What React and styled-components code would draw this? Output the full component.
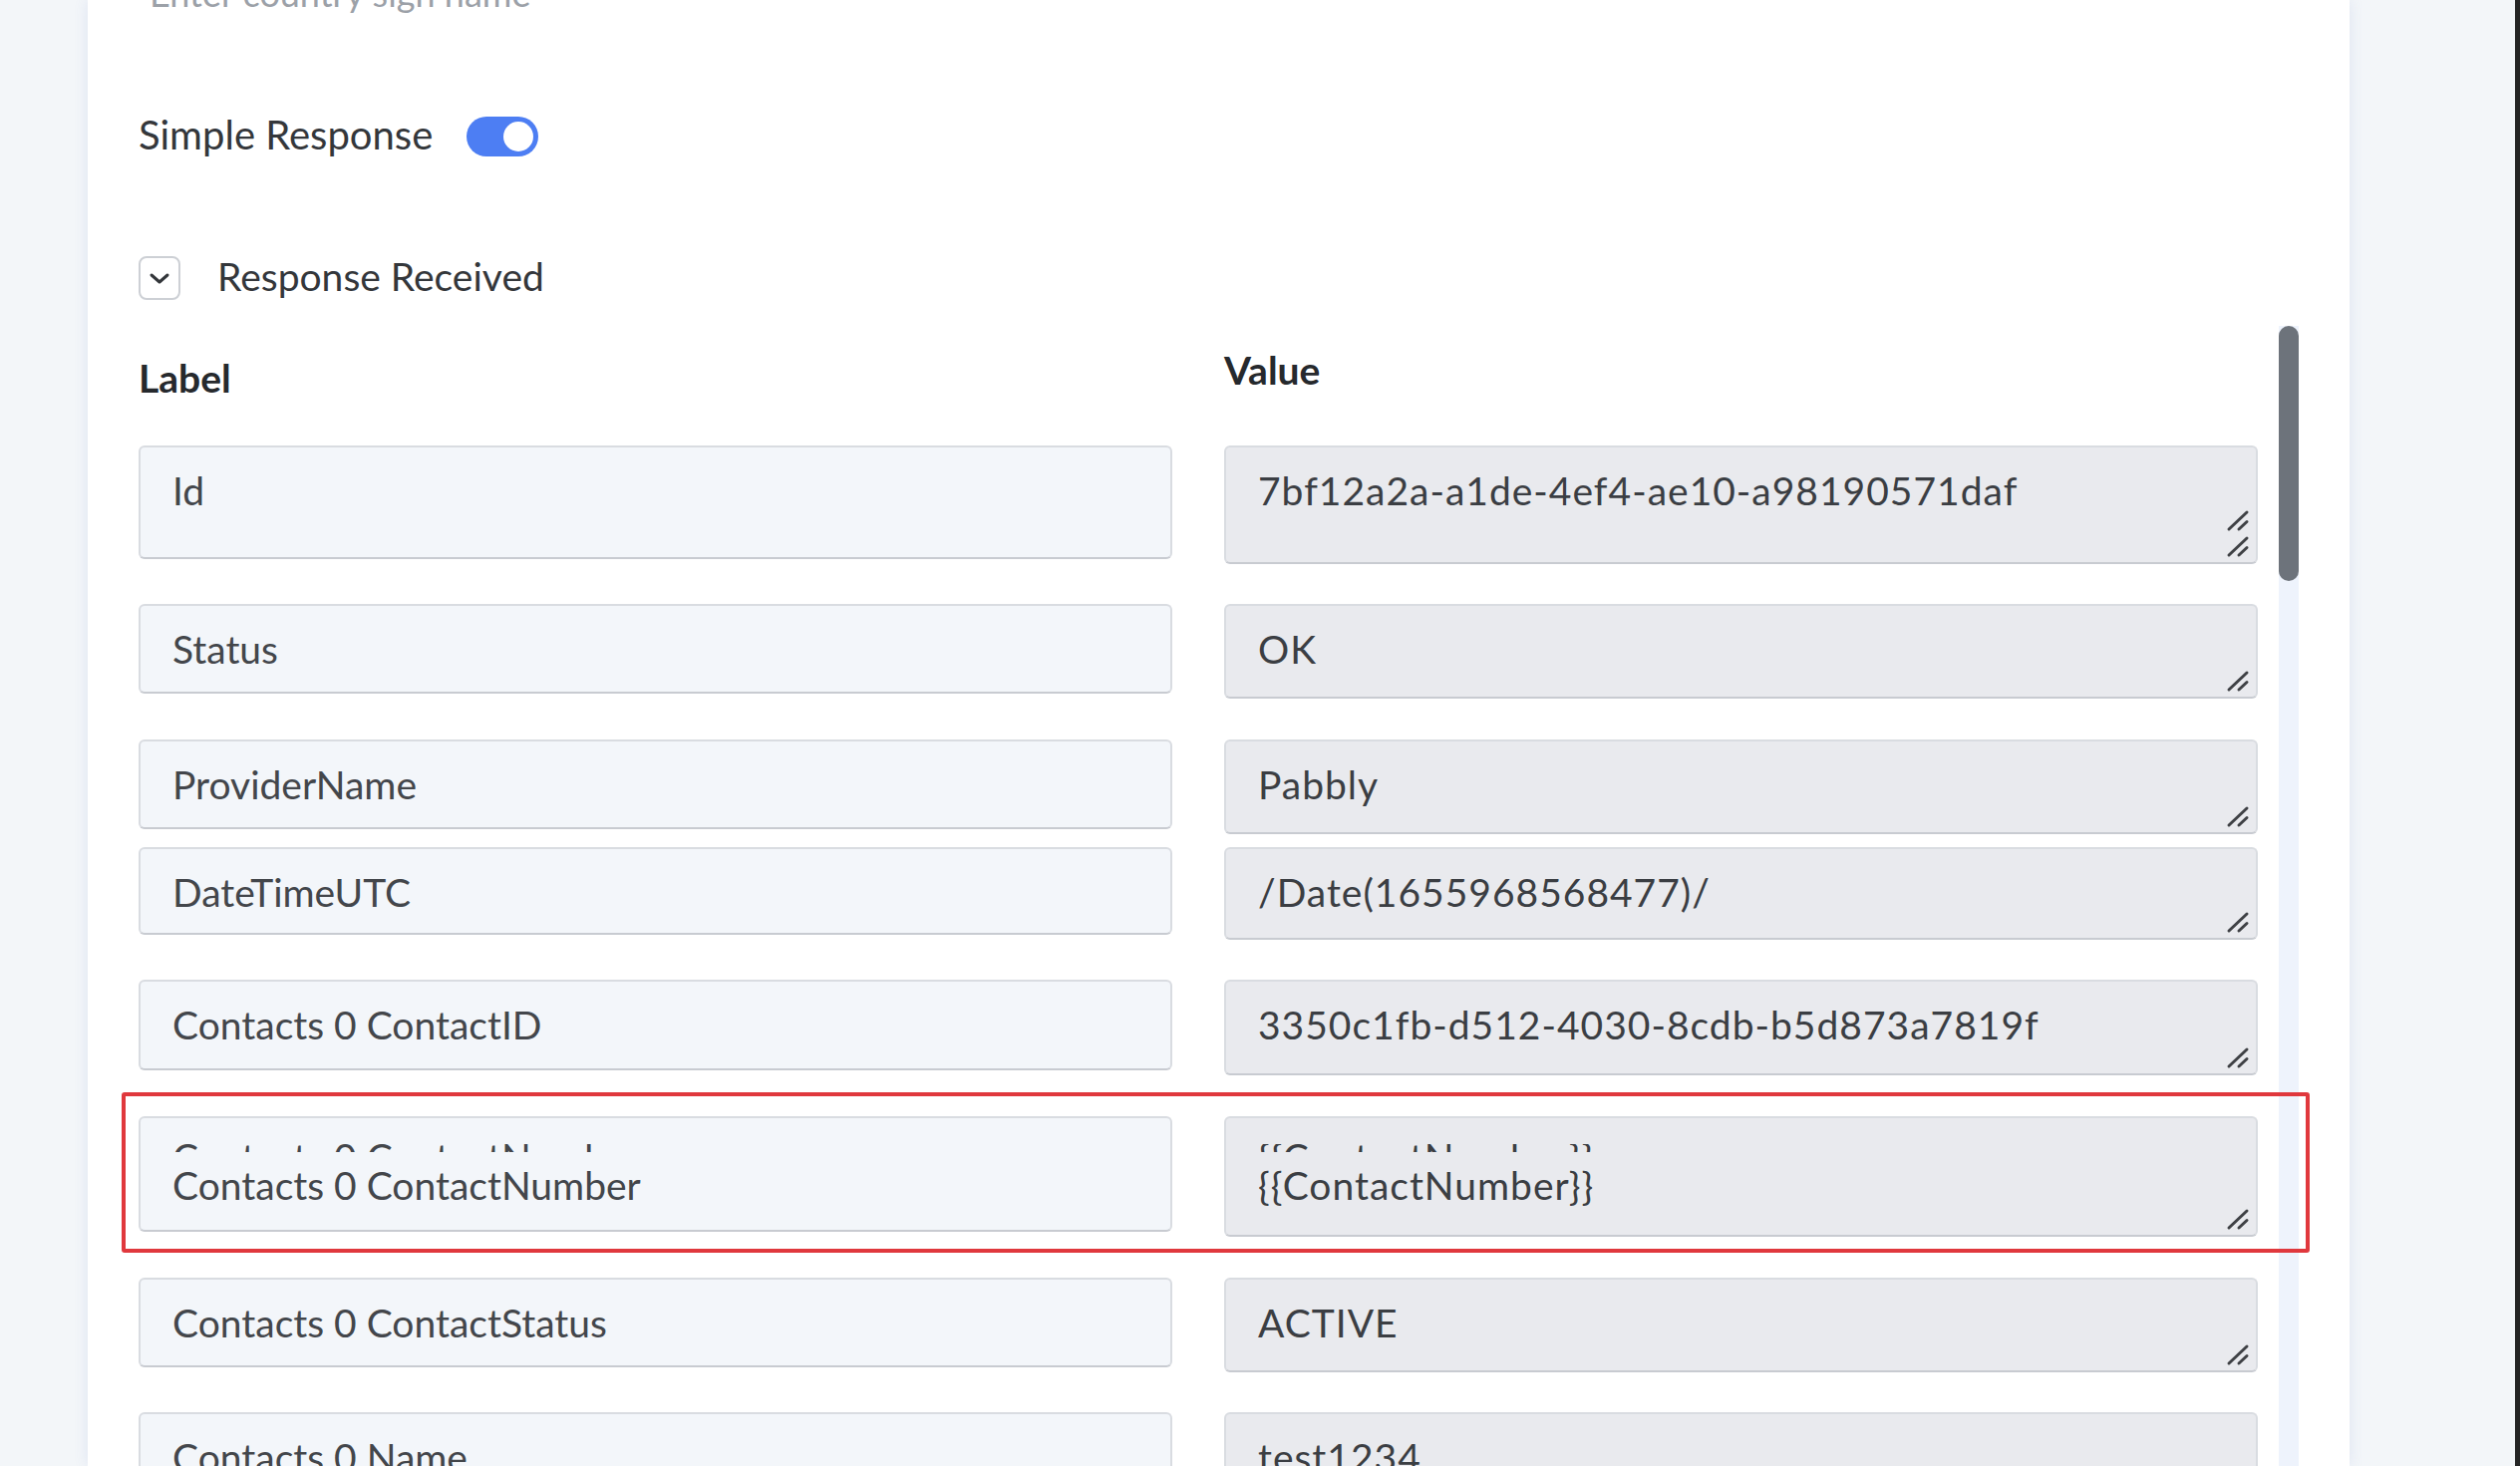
import React from 'react'
import styled, { createGlobalStyle } from 'styled-components'

const GlobalStyle = createGlobalStyle`
  html, body {
    margin: 0;
    padding: 0;
    background: #f3f6f9;
    overflow: hidden;
  }
  * {
    box-sizing: border-box;
  }
`

const Page = styled.div`
  display: flex;
  height: 1471px;
  font-family: Lato, "Open Sans", sans-serif;
  color: #3a3d42;
`

const Gutter = styled.div`
  width: 88px;
  flex-shrink: 0;
  background: #f3f6f9;
`

const Card = styled.div`
  width: 2269px;
  flex-shrink: 0;
  display: flex;
  flex-direction: column;
  padding: 0 51px;
  background: #ffffff;
  box-shadow: 0 0 14px rgba(70, 100, 190, 0.12);
  overflow: hidden;
  position: relative;
  z-index: 1;
`

const SideArea = styled.div`
  flex: 1;
  background: #f3f6f9;
`

const WindowEdge = styled.div`
  width: 5px;
  background: #252525;
`

const Placeholder = styled.div`
  margin-top: -27px;
  padding-left: 11px;
  font-size: 36px;
  line-height: 40px;
  color: #9ca1a8;
`

const ToggleRow = styled.div`
  display: flex;
  align-items: center;
  gap: 34px;
  height: 40px;
  margin-top: 104px;
  font-size: 40px;
  color: #34373b;
`

const ToggleLabel = styled.span`
  margin-top: -4px;
`

const Toggle = styled.span`
  display: flex;
  justify-content: ${p => (p.$on ? 'flex-end' : 'flex-start')};
  align-items: center;
  width: 72px;
  height: 40px;
  padding: 0 5px;
  border-radius: 20px;
  background: ${p => (p.$on ? '#4d7ef3' : '#c9ccd2')};
`

const Knob = styled.span`
  width: 30px;
  height: 30px;
  border-radius: 50%;
  background: #ffffff;
`

const CollapseRow = styled.div`
  display: flex;
  align-items: center;
  gap: 37px;
  margin-top: 100px;
  font-size: 39px;
  color: #34373b;

  & > span:last-child {
    margin-top: -5px;
  }
`

const ChevronBox = styled.span`
  display: flex;
  align-items: center;
  justify-content: center;
  width: 42px;
  height: 44px;
  border: 2px solid #cdd0d5;
  border-radius: 8px;
`

const ScrollArea = styled.div`
  display: flex;
  flex: 1;
  min-height: 0;
  margin-top: 26px;
`

const Table = styled.div`
  flex: 1;
  padding-top: 24px;
`

const RowList = styled.div`
  margin-top: 48px;
`

const Track = styled.div`
  width: 20px;
  margin-left: 21px;
  background: #eef3fc;
`

const Thumb = styled.div`
  height: 256px;
  border-radius: 10px;
  background: #6d737b;
`

const Row = styled.div`
  display: grid;
  grid-template-columns: 1fr 1fr;
  column-gap: 52px;
  align-items: start;
  position: relative;
  margin-top: ${p => p.$space}px;

  ${p => p.$marked && `
    &::after {
      content: '';
      position: absolute;
      left: -17px;
      right: -52px;
      top: -24px;
      bottom: -16px;
      border: 4px solid #e0383d;
      border-radius: 3px;
      pointer-events: none;
    }
  `}
`

const Heading = styled.div`
  margin-top: ${p => p.$offset}px;
  font-size: 39px;
  line-height: 40px;
  font-weight: 700;
  color: #26292d;
`

const Field = styled.div`
  position: relative;
  height: ${p => p.$h}px;
  padding: 23px 32px 0;
  border: 2px solid #d9dce1;
  border-bottom-color: #c8cbd1;
  border-radius: 6px;
  background: ${p => (p.$value ? '#e9eaee' : '#f3f6fa')};
  color: ${p => (p.$value ? '#3b3e43' : '#43464b')};
  font-size: 39px;
  line-height: 40px;
  letter-spacing: ${p => (p.$value ? '1px' : '0')};
  white-space: nowrap;
  overflow: hidden;
`

// first line of a scrolled textarea, only the tops of its glyphs show
const Ghost = styled.div`
  height: 8px;
  margin: 3px 0 13px;
  overflow: hidden;

  span {
    display: block;
    margin-top: -7px;
  }
`

const Grips = styled.div`
  position: absolute;
  right: 6px;
  bottom: 4px;
  display: flex;
  flex-direction: column;
  gap: 2px;
`

function Grip() {
  return (
    <svg width="24" height="24" viewBox="0 0 24 24">
      <path d="M3 21 L21 4" stroke="#3f4145" strokeWidth="3" strokeLinecap="round" />
      <path d="M13 21 L21 13.5" stroke="#3f4145" strokeWidth="3" strokeLinecap="round" />
    </svg>
  )
}

const rows = [
  { label: 'Id', value: '7bf12a2a-a1de-4ef4-ae10-a98190571daf', h: 114, space: 0, grips: 2 },
  { label: 'Status', value: 'OK', h: 90, space: 40 },
  { label: 'ProviderName', value: 'Pabbly', h: 90, space: 41 },
  { label: 'DateTimeUTC', value: '/Date(1655968568477)/', h: 88, space: 13 },
  { label: 'Contacts 0 ContactID', value: '3350c1fb-d512-4030-8cdb-b5d873a7819f', h: 91, space: 40 },
  { label: 'Contacts 0 ContactNumber', value: '{{ContactNumber}}', h: 116, space: 41, ghost: true, marked: true },
  { label: 'Contacts 0 ContactStatus', value: 'ACTIVE', h: 90, space: 41 },
  { label: 'Contacts 0 Name', value: 'test1234', h: 90, space: 40 },
]

function FieldText({ text, ghost }) {
  return (
    <>
      {ghost && (
        <Ghost>
          <span>{text}</span>
        </Ghost>
      )}
      {text}
    </>
  )
}

function ResponseRow({ row }) {
  const gripCount = row.grips || 1
  return (
    <Row $space={row.space} $marked={row.marked}>
      <Field $h={row.h}>
        <FieldText text={row.label} ghost={row.ghost} />
      </Field>
      <Field $h={row.h + 5} $value>
        <FieldText text={row.value} ghost={row.ghost} />
        <Grips>
          {Array.from({ length: gripCount }).map((_, i) => (
            <Grip key={i} />
          ))}
        </Grips>
      </Field>
    </Row>
  )
}

export default function App() {
  return (
    <Page>
      <GlobalStyle />
      <Gutter />
      <Card>
        <Placeholder>Enter country sign name</Placeholder>

        <ToggleRow>
          <ToggleLabel>Simple Response</ToggleLabel>
          <Toggle $on>
            <Knob />
          </Toggle>
        </ToggleRow>

        <CollapseRow>
          <ChevronBox>
            <svg width="22" height="13" viewBox="0 0 22 13">
              <path d="M3 3 L11 10 L19 3" fill="none" stroke="#33363a" strokeWidth="3" strokeLinecap="round" strokeLinejoin="round" />
            </svg>
          </ChevronBox>
          <span>Response Received</span>
        </CollapseRow>

        <ScrollArea>
          <Table>
            <Row $space={0}>
              <Heading $offset={8}>Label</Heading>
              <Heading $offset={0}>Value</Heading>
            </Row>
            <RowList>
              {rows.map(row => (
                <ResponseRow key={row.label} row={row} />
              ))}
            </RowList>
          </Table>
          <Track>
            <Thumb />
          </Track>
        </ScrollArea>
      </Card>
      <SideArea />
      <WindowEdge />
    </Page>
  )
}
